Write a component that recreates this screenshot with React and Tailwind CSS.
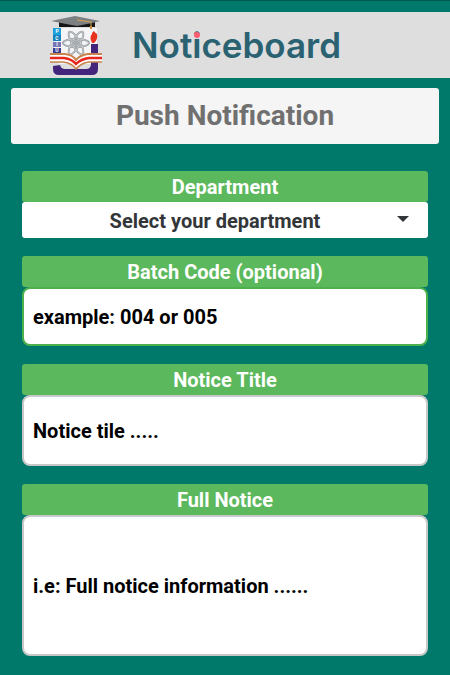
import React from "react";

function Crest() {
  return (
    <svg viewBox="0 -2 56 62" className="h-[62px] w-14 shrink-0" role="img" aria-label="University crest">
      <rect x="5" y="12" width="43" height="30" fill="#f5f5f7" />
      <path d="M4 50V53Q4 59 10 59H43Q49 59 49 53V28H42V48Q42 53 37 53H16Q12 53 11 49Z" fill="#43257c" />
      <path d="M10 35V48H42V30L38 12H12V35Z" fill="#f5f5f7" />
      <g fill="none" stroke="#8b9196" strokeWidth="1.8">
        <ellipse cx="27" cy="27" rx="13" ry="4" />
        <ellipse cx="27" cy="27" rx="13" ry="4" transform="rotate(60 27 27)" />
        <ellipse cx="27" cy="27" rx="13" ry="4" transform="rotate(120 27 27)" />
      </g>
      <g fill="none" stroke="#dfe4e8" strokeWidth="0.6">
        <ellipse cx="27" cy="27" rx="13" ry="4" />
        <ellipse cx="27" cy="27" rx="13" ry="4" transform="rotate(60 27 27)" />
        <ellipse cx="27" cy="27" rx="13" ry="4" transform="rotate(120 27 27)" />
      </g>
      <circle cx="27" cy="27" r="3" fill="#a6acb0" />
      <path d="M43 27Q40 21 43 18Q43 16 45 15Q46 17 48 18Q49 24 45 27Z" fill="#e8321f" />
      <rect x="4" y="12" width="8" height="7" fill="#1e9ed8" />
      <rect x="4" y="19" width="8" height="6" fill="#1580bd" />
      <rect x="4" y="26" width="8" height="5" fill="#7775b5" />
      <rect x="4" y="32" width="8" height="5" fill="#3b3b8f" />
      <g fontFamily="Roboto, sans-serif" fontWeight="700" fontSize="5" fill="#fff" textAnchor="middle">
        <text x="8" y="17">P</text>
        <text x="8" y="24">C</text>
        <text x="8" y="30">I</text>
        <text x="8" y="36">U</text>
      </g>
      <path d="M1 37H17Q24 38 27 44Q31 38 38 37H53V46H40Q32 47 27 53Q22 47 14 46H1Z" fill="#fff" />
      <g fill="none">
        <path d="M1 38H16Q24 39 27 44Q31 39 39 38H53" stroke="#c8834c" strokeWidth="2" />
        <path d="M1 42H15Q23 43 27 48Q32 43 40 42H53" stroke="#e8261d" strokeWidth="2.4" />
        <path d="M1 46H14Q23 47 27 53Q32 47 40 46H53" stroke="#c8834c" strokeWidth="1.6" />
      </g>
      <path d="M10 6H46V11H10Z" fill="#161616" />
      <path d="M2 5L26 0L51 5L43 7L28 10L12 7Z" fill="#7d8083" />
      <path d="M28 4L42 6V11" fill="none" stroke="#d7a453" />
      <path d="M41 10H43V13H41Z" fill="#c98d3a" />
    </svg>
  );
}

function FieldLabel({ htmlFor, children }) {
  return (
    <label
      htmlFor={htmlFor}
      className="flex h-[31px] items-center justify-center rounded-[3px] bg-[#5cb85c] pt-px text-[20px] leading-6 text-white"
    >
      {children}
    </label>
  );
}

export default function App() {
  return (
    <div className="min-h-screen border-t border-[#005b4f] bg-[#00796b] pb-[19px] pt-[11px] font-['Roboto',sans-serif] font-bold">
      <header className="flex h-[66px] items-center gap-[27px] bg-[#dedede] pl-[49px]">
        <Crest />
        <div className="font-['Inter',sans-serif] text-[35px] font-semibold leading-10 text-[#2a6272]">
          Not
          <span className="relative">
            i
            <span className="absolute left-0.5 top-2 h-1.5 w-1.5 rounded-sm bg-[#ff5b73]" />
          </span>
          ceboard
        </div>
      </header>

      <main>
        <h1 className="mx-[11px] mt-2.5 flex h-14 items-center justify-center rounded-[3px] bg-[#f5f5f5] text-[28px] leading-8 text-[#707070]">
          Push Notification
        </h1>

        <form className="mx-[22px] mt-[27px] flex flex-col gap-[18px]">
          <div>
            <FieldLabel htmlFor="department">Department</FieldLabel>
            <div className="relative">
              <select
                id="department"
                className="block h-9 w-full appearance-none rounded-[3px] bg-white pl-5 pr-10 pt-px text-[20px] leading-6 text-[#333638] [text-align-last:center]"
              >
                <option>Select your department</option>
              </select>
              <svg viewBox="0 0 12 6" className="pointer-events-none absolute right-[19px] top-3.5 h-1.5 w-3" aria-hidden="true">
                <path d="M0 0H12L6 6Z" fill="#333638" />
              </svg>
            </div>
          </div>

          <div>
            <FieldLabel htmlFor="batch">Batch Code (optional)</FieldLabel>
            <input
              id="batch"
              type="text"
              placeholder="example: 004 or 005"
              className="block h-[59px] w-full rounded-lg border-2 border-[#4cb04c] bg-white px-[9px] text-[20px] leading-6 text-black placeholder:text-black"
            />
          </div>

          <div>
            <FieldLabel htmlFor="title">Notice Title</FieldLabel>
            <input
              id="title"
              type="text"
              placeholder="Notice tile ....."
              className="block h-[71px] w-full rounded-lg border-2 border-[#c8c8c8] bg-white px-[9px] text-[20px] leading-6 text-black placeholder:text-black"
            />
          </div>

          <div>
            <FieldLabel htmlFor="notice">Full Notice</FieldLabel>
            <textarea
              id="notice"
              placeholder="i.e: Full notice information ......"
              className="block h-[141px] w-full resize-none rounded-lg border-2 border-[#c8c8c8] bg-white px-[9px] pt-[57px] text-[20px] leading-6 text-black placeholder:text-black"
            />
          </div>
        </form>
      </main>
    </div>
  );
}
